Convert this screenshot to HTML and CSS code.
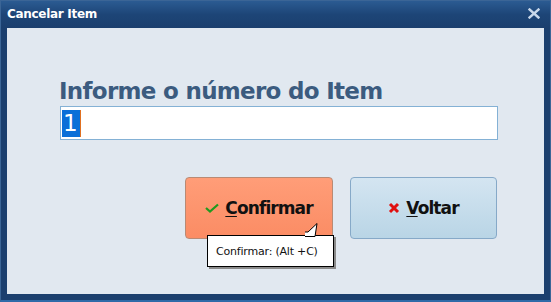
FILE: index.html
```html
<!DOCTYPE html>
<html>
<head>
<meta charset="utf-8">
<link rel="stylesheet" href="styles.css">
</head>
<body>
<div class="window">
  <div class="titlebar">
    <span class="title">Cancelar Item</span>
    <svg class="close" width="12" height="11" viewBox="0 0 12 11"><path d="M1.5 1.5 L10.5 9.5 M10.5 1.5 L1.5 9.5" stroke="#c9d8ea" stroke-width="2.4" stroke-linecap="square"/></svg>
  </div>
  <div class="client">
    <div class="label">Informe o número do Item</div>
    <div class="input"><span class="sel">1</span><span class="caret"></span></div>
    <div class="buttons">
      <div class="btn confirm">
        <svg class="ico" width="14" height="10" viewBox="0 0 14 10"><path d="M1 5 L5 8.5 L13 1.5" fill="none" stroke="#1f9a1f" stroke-width="2.2"/></svg>
        <span><u>C</u>onfirmar</span>
        <div class="tooltip">Confirmar: (Alt +C)
          <svg class="pointer" width="20" height="14" viewBox="0 0 20 14"><path d="M0 13.5 L10 13.5 L12 0.5 L3 9 L0 9" fill="#fff" stroke="#000" stroke-width="1"/></svg>
        </div>
      </div>
      <div class="btn back">
        <svg class="ico" width="12" height="12" viewBox="0 0 12 12"><path d="M2 2 L10 10 M10 2 L2 10" stroke="#e01010" stroke-width="3"/></svg>
        <span><u>V</u>oltar</span>
      </div>
    </div>
  </div>
</div>
</body>
</html>
```
FILE: styles.css
```css
html, body { margin: 0; padding: 0; }
body { width: 551px; height: 302px; overflow: hidden; font-family: "DejaVu Sans", Tahoma, sans-serif; }
.window {
  width: 551px; height: 302px; box-sizing: border-box;
  background: #1b3f6e;
  border: 1px solid #3b6596;
  border-bottom: 2px solid #2f6aa8;
  display: flex; flex-direction: column;
}
.titlebar {
  height: 27px; flex: none;
  background: linear-gradient(#2b5b92, #1d4577 50%, #1b3f6e);
  display: flex; align-items: center; justify-content: space-between;
  padding: 0 10px 0 6px;
}
.title { color: #fff; font-weight: bold; font-size: 12px; letter-spacing: -0.3px; margin-top: -2px; }
.close { margin-top: -2px; }
.client {
  flex: 1; margin: 0 6px 6px 6px;
  background: #e1e8f0;
  display: flex; flex-direction: column;
  padding: 50px 0 0 53px;
  position: relative;
}
.label {
  color: #3b5b7f; font-weight: bold; font-size: 23px; letter-spacing: -0.7px;
  line-height: 27px; margin-left: -1px;
}
.input {
  width: 438px; height: 34px; box-sizing: border-box;
  background: #fff; border: 1px solid #84b1d5;
  display: flex; align-items: center; padding-left: 1px; margin-top: 1px;
}
.sel { background: #0a6fd8; color: #fff; font-size: 23px; line-height: 27px; padding: 0 2px 0 1px; }
.caret { width: 1px; height: 27px; background: #e07020; }
.buttons { display: flex; gap: 17px; margin-top: 37px; padding-left: 125px; }
.btn {
  width: 148px; height: 62px; box-sizing: border-box;
  border-radius: 4px; display: flex; align-items: center; justify-content: center; gap: 6px;
  font-weight: bold; font-size: 17px; letter-spacing: -0.9px; color: #111; position: relative;
}
.btn u { text-decoration-thickness: 1px; text-underline-offset: 2px; }
.confirm { background: linear-gradient(#ff9d78, #fb8c64); border: 1px solid #b98a74; }
.back { width: 147px; background: linear-gradient(#d4e5f1, #b9d5e6); border: 1px solid #86a9c8; }
.tooltip {
  position: absolute; left: 21px; top: 57px;
  width: 127px; height: 32px; box-sizing: border-box;
  background: #fff; border: 1px solid #000;
  box-shadow: 2px 2px 0 #8a8a8a;
  font-weight: normal; font-size: 11px; color: #111;
  display: flex; align-items: center; padding-left: 8px;
  font-family: "DejaVu Sans", Tahoma, sans-serif; letter-spacing: -0.2px;
}
.pointer { position: absolute; right: 8px; top: -13px; }
```
